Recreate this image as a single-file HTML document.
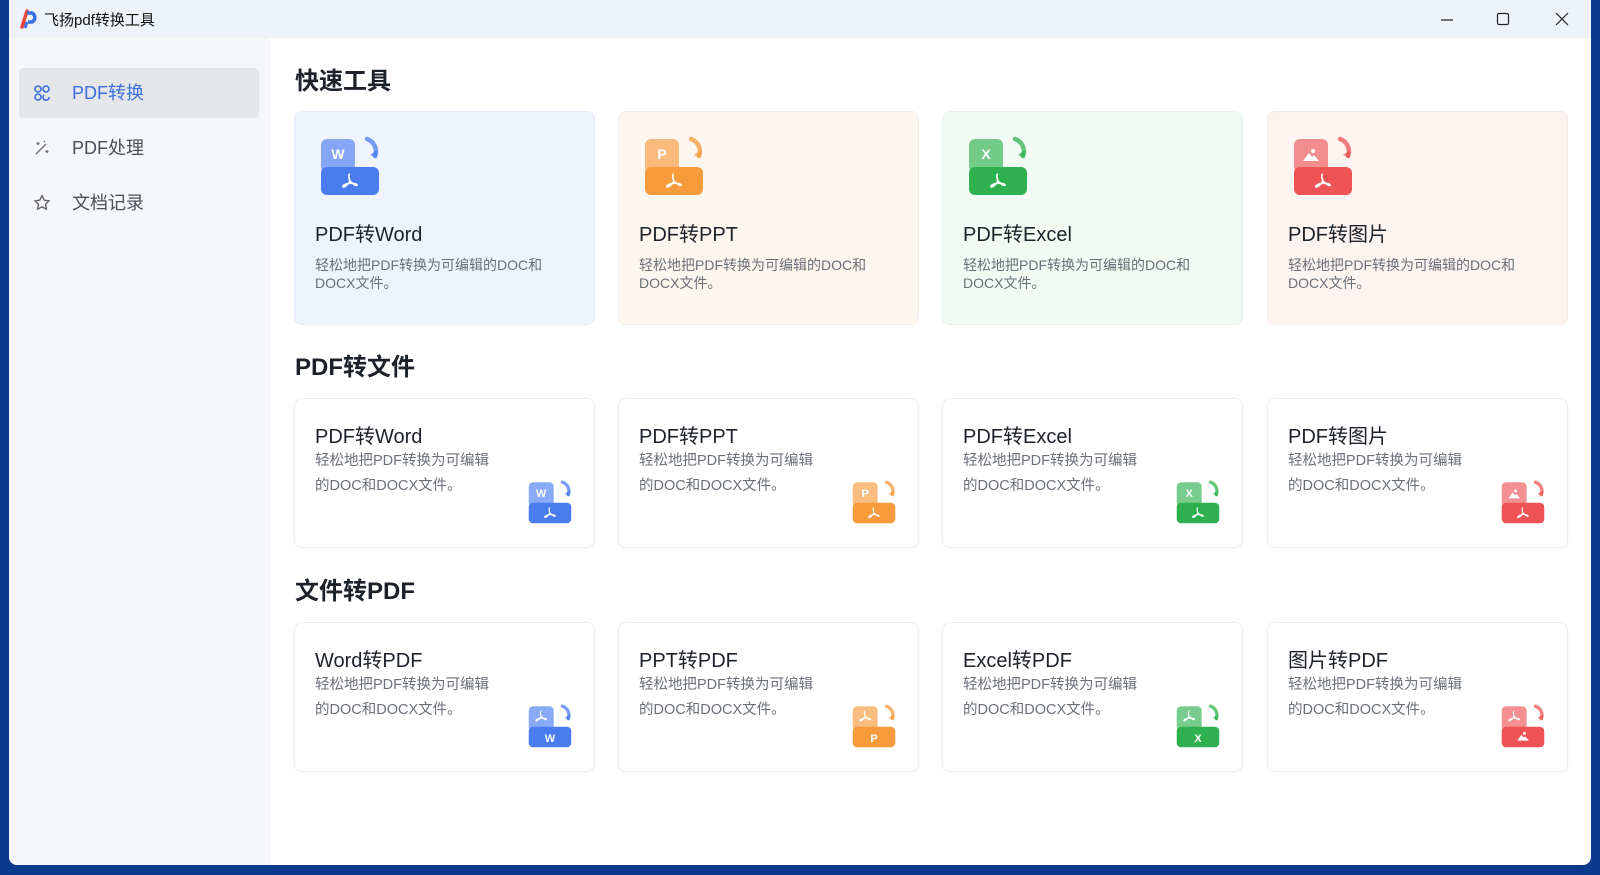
<!DOCTYPE html>
<html><head><meta charset="utf-8">
<style>
*{margin:0;padding:0;box-sizing:border-box}
body{width:1600px;height:875px;overflow:hidden;background:#0b3a8c;font-family:"Liberation Sans","Noto Sans CJK SC",sans-serif;position:relative}
.win{position:absolute;left:9px;top:0;width:1582px;height:865px;background:#fff;border-radius:0 0 8px 8px;overflow:hidden}
.tb{position:absolute;left:0;top:0;width:100%;height:38px;background:#eef2fa}
.tb .t{position:absolute;left:35px;top:9px;font-size:15px;color:#111}
.side{position:absolute;left:0;top:38px;width:261px;height:827px;background:#f5f7fb}
.mi{position:absolute;left:10px;width:240px;height:50px;border-radius:4px;font-size:18px;color:#4a4f58;line-height:50px;padding-left:53px}
.mi.sel{background:#e4e6ea;color:#3b6fe0}
.mi svg{position:absolute;left:14px;top:16px}
.h{position:absolute;left:286px;font-size:24px;font-weight:bold;color:#1d2129}
.card{position:absolute;width:301px;border-radius:8px}
.q{height:214px;top:111px;border:1px solid rgba(0,0,0,.035)}
.q .ic{position:absolute;left:25px;top:24px}
.q .tt{position:absolute;left:20px;top:106px;font-size:20px;color:#1d2129}
.q .d{position:absolute;left:20px;top:144px;width:250px;font-size:14px;line-height:18px;color:#6b6f78}
.n{height:150px;border:1px solid #eceef2;box-shadow:0 1px 3px rgba(0,0,0,.03)}
.n .tt{position:absolute;left:20px;top:21px;font-size:20px;color:#1d2129}
.n .d{position:absolute;left:20px;top:50px;width:185px;font-size:14.5px;line-height:25px;color:#6b6f78}
.n .ic{position:absolute;right:22px;bottom:23px}
</style></head><body>
<svg width="0" height="0" style="position:absolute">
<defs>
<symbol id="arr" viewBox="0 0 60 60"><path d="M47 3 A13 13 0 0 1 55 20" fill="none" stroke="currentColor" stroke-width="4.5" stroke-linecap="round" opacity=".75"/><path d="M50 19 L57 22 L57 14 Z" fill="currentColor" opacity=".75"/></symbol>
<symbol id="acro" viewBox="0 0 20 20"><path d="M10 3 C8 3 9 8 10 10 C8 13 5 16 3 16 C2 16 3 14 6 13 C9 12 13 12 16 13 C18 14 17 15 15 14 C13 13 11 11 10 10" fill="none" stroke="#fff" stroke-width="1.6" stroke-linejoin="round"/></symbol>
<symbol id="img" viewBox="0 0 20 20"><circle cx="12" cy="6" r="2" fill="#fff"/><path d="M2 16 L8 8 L11 12 L13 10 L18 16 Z" fill="#fff"/></symbol>
</defs></svg>
<div class="win">
<div class="tb">
<svg style="position:absolute;left:10px;top:9px" width="20" height="20" viewBox="0 0 20 20"><path d="M3 18 L8 2" stroke="#e8453c" stroke-width="3.5" stroke-linecap="round"/><path d="M8 4 H13 A5 5 0 0 1 13 13 H9" fill="none" stroke="#3b6fe0" stroke-width="3.5"/><path d="M8 13 L6 19" stroke="#3b6fe0" stroke-width="3"/></svg>
<div class="t">飞扬pdf转换工具</div>
<svg style="position:absolute;left:1431px;top:13px" width="14" height="14"><path d="M1 7H13" stroke="#222" stroke-width="1.2"/></svg>
<svg style="position:absolute;left:1487px;top:12px" width="14" height="14"><rect x="1.5" y="1.5" width="11" height="11" rx="1.5" fill="none" stroke="#222" stroke-width="1.2"/></svg>
<svg style="position:absolute;left:1546px;top:12px" width="14" height="14"><path d="M1 1L13 13M13 1L1 13" stroke="#222" stroke-width="1.2"/></svg>
</div>
<div class="side">
<div class="mi sel" style="top:30px"><svg width="18" height="18" viewBox="0 0 18 18" fill="none" stroke="#3b6fe0" stroke-width="1.6"><circle cx="5" cy="5" r="3"/><circle cx="13" cy="5" r="3"/><circle cx="5" cy="13" r="3"/><path d="M11 11 A3 3 0 1 0 16 13"/></svg>PDF转换</div>
<div class="mi" style="top:85px"><svg width="18" height="18" viewBox="0 0 18 18" fill="none" stroke="#777" stroke-width="1.5"><path d="M3 15 L13 5"/><path d="M5 3v3M3.5 4.5h3M14 11v3M12.5 12.5h3M11 2l1 1"/></svg>PDF处理</div>
<div class="mi" style="top:140px"><svg width="18" height="18" viewBox="0 0 18 18" fill="none" stroke="#666" stroke-width="1.4" stroke-linejoin="round"><path d="M9 1.5 L11.2 6.2 L16.2 6.8 L12.5 10.3 L13.5 15.3 L9 12.8 L4.5 15.3 L5.5 10.3 L1.8 6.8 L6.8 6.2 Z"/></svg>文档记录</div>
</div>

<div class="h" style="top:61px">快速工具</div>
<div class="h" style="top:347px">PDF转文件</div>
<div class="h" style="top:571px">文件转PDF</div>

<div class="card q" style="left:285px;background:#eff3fd"><svg class="ic" width="60" height="60" viewBox="0 0 60 60" style="color:#4a7cf0"><rect x="1" y="3" width="34" height="34" rx="6" fill="#4a7cf0" opacity=".65"/><rect x="1" y="31" width="58" height="28" rx="6" fill="#4a7cf0"/><use href="#arr" width="60" height="60"/><text x="18" y="23" font-size="14" font-weight="bold" fill="#fff" text-anchor="middle" font-family="Liberation Sans">W</text><use href="#acro" x="20" y="35" width="20" height="20"/></svg><div class="tt">PDF转Word</div><div class="d">轻松地把PDF转换为可编辑的DOC和DOCX文件。</div></div>
<div class="card q" style="left:609px;background:#fdf6ef"><svg class="ic" width="60" height="60" viewBox="0 0 60 60" style="color:#f79a3c"><rect x="1" y="3" width="34" height="34" rx="6" fill="#f79a3c" opacity=".65"/><rect x="1" y="31" width="58" height="28" rx="6" fill="#f79a3c"/><use href="#arr" width="60" height="60"/><text x="18" y="23" font-size="14" font-weight="bold" fill="#fff" text-anchor="middle" font-family="Liberation Sans">P</text><use href="#acro" x="20" y="35" width="20" height="20"/></svg><div class="tt">PDF转PPT</div><div class="d">轻松地把PDF转换为可编辑的DOC和DOCX文件。</div></div>
<div class="card q" style="left:933px;background:#f1fbf3"><svg class="ic" width="60" height="60" viewBox="0 0 60 60" style="color:#2fb150"><rect x="1" y="3" width="34" height="34" rx="6" fill="#2fb150" opacity=".65"/><rect x="1" y="31" width="58" height="28" rx="6" fill="#2fb150"/><use href="#arr" width="60" height="60"/><text x="18" y="23" font-size="14" font-weight="bold" fill="#fff" text-anchor="middle" font-family="Liberation Sans">X</text><use href="#acro" x="20" y="35" width="20" height="20"/></svg><div class="tt">PDF转Excel</div><div class="d">轻松地把PDF转换为可编辑的DOC和DOCX文件。</div></div>
<div class="card q" style="left:1258px;background:#fdf3f1"><svg class="ic" width="60" height="60" viewBox="0 0 60 60" style="color:#ee5456"><rect x="1" y="3" width="34" height="34" rx="6" fill="#ee5456" opacity=".65"/><rect x="1" y="31" width="58" height="28" rx="6" fill="#ee5456"/><use href="#arr" width="60" height="60"/><use href="#img" x="8" y="9" width="20" height="20"/><use href="#acro" x="20" y="35" width="20" height="20"/></svg><div class="tt">PDF转图片</div><div class="d">轻松地把PDF转换为可编辑的DOC和DOCX文件。</div></div>

<div class="card n" style="left:285px;top:398px"><div class="tt">PDF转Word</div><div class="d">轻松地把PDF转换为可编辑的DOC和DOCX文件。</div><svg class="ic" width="44" height="44" viewBox="0 0 60 60" style="color:#4a7cf0"><rect x="1" y="3" width="34" height="34" rx="6" fill="#4a7cf0" opacity=".65"/><rect x="1" y="31" width="58" height="28" rx="6" fill="#4a7cf0"/><use href="#arr" width="60" height="60"/><text x="18" y="23" font-size="15" font-weight="bold" fill="#fff" text-anchor="middle" font-family="Liberation Sans">W</text><use href="#acro" x="20" y="35" width="20" height="20"/></svg></div>
<div class="card n" style="left:609px;top:398px"><div class="tt">PDF转PPT</div><div class="d">轻松地把PDF转换为可编辑的DOC和DOCX文件。</div><svg class="ic" width="44" height="44" viewBox="0 0 60 60" style="color:#f79a3c"><rect x="1" y="3" width="34" height="34" rx="6" fill="#f79a3c" opacity=".65"/><rect x="1" y="31" width="58" height="28" rx="6" fill="#f79a3c"/><use href="#arr" width="60" height="60"/><text x="18" y="23" font-size="15" font-weight="bold" fill="#fff" text-anchor="middle" font-family="Liberation Sans">P</text><use href="#acro" x="20" y="35" width="20" height="20"/></svg></div>
<div class="card n" style="left:933px;top:398px"><div class="tt">PDF转Excel</div><div class="d">轻松地把PDF转换为可编辑的DOC和DOCX文件。</div><svg class="ic" width="44" height="44" viewBox="0 0 60 60" style="color:#2fb150"><rect x="1" y="3" width="34" height="34" rx="6" fill="#2fb150" opacity=".65"/><rect x="1" y="31" width="58" height="28" rx="6" fill="#2fb150"/><use href="#arr" width="60" height="60"/><text x="18" y="23" font-size="15" font-weight="bold" fill="#fff" text-anchor="middle" font-family="Liberation Sans">X</text><use href="#acro" x="20" y="35" width="20" height="20"/></svg></div>
<div class="card n" style="left:1258px;top:398px"><div class="tt">PDF转图片</div><div class="d">轻松地把PDF转换为可编辑的DOC和DOCX文件。</div><svg class="ic" width="44" height="44" viewBox="0 0 60 60" style="color:#ee5456"><rect x="1" y="3" width="34" height="34" rx="6" fill="#ee5456" opacity=".65"/><rect x="1" y="31" width="58" height="28" rx="6" fill="#ee5456"/><use href="#arr" width="60" height="60"/><use href="#img" x="8" y="9" width="20" height="20"/><use href="#acro" x="20" y="35" width="20" height="20"/></svg></div>

<div class="card n" style="left:285px;top:622px"><div class="tt">Word转PDF</div><div class="d">轻松地把PDF转换为可编辑的DOC和DOCX文件。</div><svg class="ic" width="44" height="44" viewBox="0 0 60 60" style="color:#4a7cf0"><rect x="1" y="3" width="34" height="34" rx="6" fill="#4a7cf0" opacity=".65"/><rect x="1" y="31" width="58" height="28" rx="6" fill="#4a7cf0"/><use href="#arr" width="60" height="60"/><use href="#acro" x="8" y="7" width="20" height="20"/><text x="30" y="52" font-size="15" font-weight="bold" fill="#fff" text-anchor="middle" font-family="Liberation Sans">W</text></svg></div>
<div class="card n" style="left:609px;top:622px"><div class="tt">PPT转PDF</div><div class="d">轻松地把PDF转换为可编辑的DOC和DOCX文件。</div><svg class="ic" width="44" height="44" viewBox="0 0 60 60" style="color:#f79a3c"><rect x="1" y="3" width="34" height="34" rx="6" fill="#f79a3c" opacity=".65"/><rect x="1" y="31" width="58" height="28" rx="6" fill="#f79a3c"/><use href="#arr" width="60" height="60"/><use href="#acro" x="8" y="7" width="20" height="20"/><text x="30" y="52" font-size="15" font-weight="bold" fill="#fff" text-anchor="middle" font-family="Liberation Sans">P</text></svg></div>
<div class="card n" style="left:933px;top:622px"><div class="tt">Excel转PDF</div><div class="d">轻松地把PDF转换为可编辑的DOC和DOCX文件。</div><svg class="ic" width="44" height="44" viewBox="0 0 60 60" style="color:#2fb150"><rect x="1" y="3" width="34" height="34" rx="6" fill="#2fb150" opacity=".65"/><rect x="1" y="31" width="58" height="28" rx="6" fill="#2fb150"/><use href="#arr" width="60" height="60"/><use href="#acro" x="8" y="7" width="20" height="20"/><text x="30" y="52" font-size="15" font-weight="bold" fill="#fff" text-anchor="middle" font-family="Liberation Sans">X</text></svg></div>
<div class="card n" style="left:1258px;top:622px"><div class="tt">图片转PDF</div><div class="d">轻松地把PDF转换为可编辑的DOC和DOCX文件。</div><svg class="ic" width="44" height="44" viewBox="0 0 60 60" style="color:#ee5456"><rect x="1" y="3" width="34" height="34" rx="6" fill="#ee5456" opacity=".65"/><rect x="1" y="31" width="58" height="28" rx="6" fill="#ee5456"/><use href="#arr" width="60" height="60"/><use href="#acro" x="8" y="7" width="20" height="20"/><use href="#img" x="20" y="34" width="20" height="20"/></svg></div>
</div>
</body></html>
